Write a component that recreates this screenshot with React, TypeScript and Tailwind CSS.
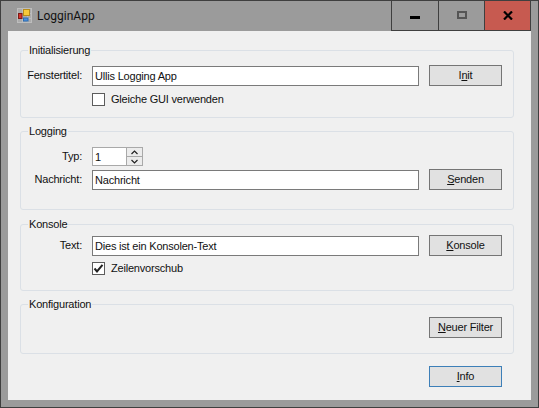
import React from "react";

const font = { fontFamily: '"Liberation Sans", Arial, sans-serif' };

function WinButton({ children, focused = false }: { children: React.ReactNode; focused?: boolean }) {
  return (
    <button
      className={`w-[73px] h-[21px] flex items-center justify-center bg-[#e1e1e1] border text-[11px] tracking-[-0.2px] leading-none text-[#111] ${
        focused ? "border-[#3d7fb8]" : "border-[#757575]"
      }`}
    >
      <span>{children}</span>
    </button>
  );
}

function TextBox({ value }: { value: string }) {
  return (
    <input
      readOnly
      value={value}
      className="w-[327px] h-[20px] border border-[#7a7a7a] bg-white pl-[2px] text-[11px] tracking-[-0.2px] text-[#111] outline-none"
    />
  );
}

function Group({ title, children, className }: { title: string; children: React.ReactNode; className: string }) {
  return (
    <fieldset className={`w-[494px] ml-[12px] border border-[#dbe0e6] rounded-[3px] ${className}`}>
      <legend className="ml-[7px] px-[1px] h-[16px] leading-[16px] text-[11px] tracking-[-0.2px] text-[#111]">{title}</legend>
      {children}
    </fieldset>
  );
}

function Row({ label, children, button }: { label?: string; children: React.ReactNode; button?: React.ReactNode }) {
  return (
    <div className="grid grid-cols-[61px_327px_73px] gap-x-[10px] items-center">
      <div className="text-right text-[11px] tracking-[-0.2px] text-[#111] whitespace-nowrap">{label}</div>
      <div className="flex items-center">{children}</div>
      <div>{button}</div>
    </div>
  );
}

function Check({ label, checked = false }: { label: string; checked?: boolean }) {
  return (
    <div className="flex items-center gap-[6px] h-[13px]">
      <span className="w-[13px] h-[13px] border border-[#5c5c5c] bg-white flex items-center justify-center">
        {checked && (
          <svg width="11" height="11" viewBox="0 0 11 11">
            <path d="M1.5 5.5 L4 8.5 L9.5 1.8" fill="none" stroke="#222" strokeWidth="2" />
          </svg>
        )}
      </span>
      <span className="text-[11px] tracking-[-0.2px] text-[#111] whitespace-nowrap">{label}</span>
    </div>
  );
}

function Spinner() {
  return (
    <div className="w-[51px] h-[19px] border border-[#a9a9a9] bg-white flex">
      <input readOnly value="1" className="w-[33px] h-full pl-[2px] text-[11px] text-[#111] outline-none bg-white" />
      <div className="w-[16px] flex flex-col gap-[1px] bg-[#a9a9a9] pl-[1px]">
        <span className="flex-1 bg-[#ececec] flex items-center justify-center">
          <svg width="7" height="5" viewBox="0 0 7 5">
            <path d="M0.5 4 L3.5 1 L6.5 4" fill="none" stroke="#222" strokeWidth="1.2" />
          </svg>
        </span>
        <span className="flex-1 bg-[#ececec] flex items-center justify-center">
          <svg width="7" height="5" viewBox="0 0 7 5">
            <path d="M0.5 1 L3.5 4 L6.5 1" fill="none" stroke="#222" strokeWidth="1.2" />
          </svg>
        </span>
      </div>
    </div>
  );
}

export default function App() {
  return (
    <div style={font} className="w-[539px] h-[408px] bg-[#9b9b9b] border border-[#3f3f3f] flex flex-col overflow-hidden">
      <div className="h-[30px] shrink-0 flex items-start pr-[7px]">
        <svg width="15" height="15" viewBox="0 0 15 15" className="ml-[16px] mt-[7px]">
          <rect x="0.5" y="0.5" width="14" height="14" fill="#ababab" stroke="#bdbdbd" />
          <path d="M5.5 1v13M10.5 1v13M1 5.5h13M1 10.5h13" stroke="#bdbdbd" />
          <rect x="1.5" y="5.5" width="3.5" height="5" fill="#d8332a" stroke="#7c1a16" />
          <rect x="6.5" y="1.5" width="6" height="6" fill="#f7c93a" stroke="#b78c1a" />
          <rect x="6.5" y="10" width="4.5" height="3" fill="#4a90e2" stroke="#2d6cb0" />
        </svg>
        <span style={{ fontFamily: "Roboto, sans-serif" }} className="ml-[5px] mt-[6px] text-[12px] leading-[18px] text-[#111]">
          LogginApp
        </span>
        <div className="ml-auto flex h-[30px] border-b border-[#3f3f3f]">
          <div className="w-[47px] border-l border-[#3f3f3f] flex items-center justify-center">
            <svg width="11" height="4" viewBox="0 0 11 4" className="mt-[5px]">
              <rect width="10" height="3" fill="#000" />
            </svg>
          </div>
          <div className="w-[46px] border-l border-[#3f3f3f] flex items-center justify-center">
            <svg width="10" height="8" viewBox="0 0 10 8" className="mb-[1px]">
              <rect x="1" y="1" width="8" height="6" fill="none" stroke="#555" strokeWidth="2" />
            </svg>
          </div>
          <div className="w-[47px] border-x border-[#3f3f3f] bg-[#c75a50] flex items-center justify-center">
            <svg width="10" height="9" viewBox="0 0 10 9" className="mb-[1px]">
              <path d="M1 0.5 L9 8.5 M9 0.5 L1 8.5" stroke="#000" strokeWidth="2.2" />
            </svg>
          </div>
        </div>
      </div>

      <div className="w-[523px] ml-[7px] h-[369px] bg-[#f0f0f0] pt-[11px]">
        <Group title="Initialisierung" className="h-[76px]">
          <div className="pt-[7px]">
            <Row label="Fenstertitel:" button={<WinButton>I<span className="underline">n</span>it</WinButton>}>
              <TextBox value="Ullis Logging App" />
            </Row>
            <div className="pl-[71px] mt-[7px]">
              <Check label="Gleiche GUI verwenden" />
            </div>
          </div>
        </Group>

        <Group title="Logging" className="h-[87px] mt-[5px]">
          <div className="pt-[8px] flex flex-col gap-[3px]">
            <Row label="Typ:">
              <Spinner />
            </Row>
            <Row label="Nachricht:" button={<WinButton><span className="underline">S</span>enden</WinButton>}>
              <TextBox value="Nachricht" />
            </Row>
          </div>
        </Group>

        <Group title="Konsole" className="h-[75px] mt-[6px]">
          <div className="pt-[3px]">
            <Row label="Text:" button={<WinButton><span className="underline">K</span>onsole</WinButton>}>
              <TextBox value="Dies ist ein Konsolen-Text" />
            </Row>
            <div className="pl-[71px] mt-[6px]">
              <Check label="Zeilenvorschub" checked />
            </div>
          </div>
        </Group>

        <Group title="Konfiguration" className="h-[58px] mt-[5px]">
          <div className="pt-[5px] flex justify-end pr-[11px]">
            <WinButton><span className="underline">N</span>euer Filter</WinButton>
          </div>
        </Group>

        <div className="mt-[12px] pl-[421px]">
          <WinButton focused><span className="underline">I</span>nfo</WinButton>
        </div>
      </div>
    </div>
  );
}
